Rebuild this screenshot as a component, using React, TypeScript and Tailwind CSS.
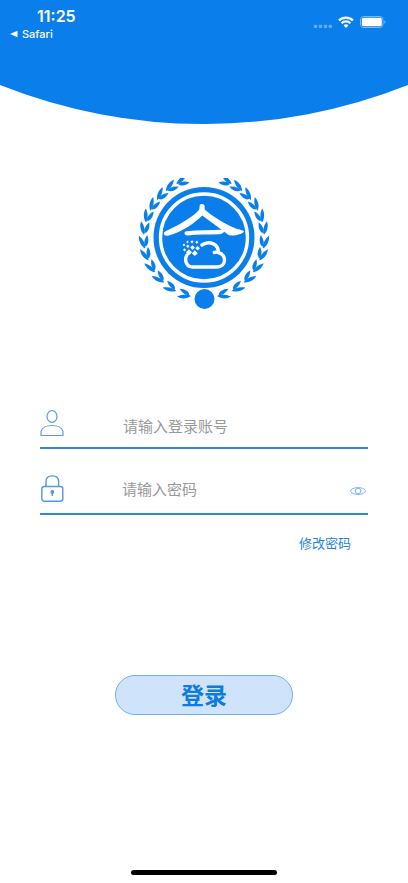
import { useState } from "react"

// Degrees around the emblem, measured from its bottom
const leafAngles = [14, 29, 43, 56, 69, 81, 94, 106, 118, 130, 142, 154]

function StatusBar() {
  return (
    <div className="flex items-start justify-between pt-1.5 pr-[22px] pl-2.5 text-white">
      <div>
        <p className="pl-[27px] font-['Inter'] text-base leading-5 font-semibold">11:25</p>
        <a href="#safari" className="flex items-center gap-1 font-['Inter'] text-[11px] leading-4 font-medium">
          <svg width="8" height="8" viewBox="0 0 8 8" fill="currentColor" aria-hidden="true">
            <path d="M0 4 7.5 .7v6.6z" />
          </svg>
          Safari
        </a>
      </div>

      <div className="flex items-center pt-2.5">
        <svg width="19" height="12" viewBox="0 0 19 12" fill="#fff" opacity=".35" aria-hidden="true">
          <rect x=".8" y="8.8" width="3.4" height="3.2" rx="1" />
          <rect x="5.8" y="8.8" width="3.4" height="3.2" rx="1" />
          <rect x="10.8" y="8.8" width="3.4" height="3.2" rx="1" />
          <rect x="15.6" y="8.8" width="3.4" height="3.2" rx="1" />
        </svg>
        <svg className="ml-1.5" width="16" height="12" viewBox="0 0 16 12" fill="none" stroke="#fff" strokeWidth="2.3" aria-hidden="true">
          <path d="M1 4.5a10 10 0 0 1 14 0" />
          <path d="M3.6 7.3a6.2 6.2 0 0 1 8.8 0" />
          <path d="M8 12 5.6 9.5a3.3 3.3 0 0 1 4.8 0z" fill="#fff" stroke="none" />
        </svg>
        <svg className="ml-1.5" width="26" height="12" viewBox="0 0 26 12" fill="#fff" aria-hidden="true">
          <rect x=".5" y=".5" width="22.5" height="11" rx="3.2" fill="none" stroke="#fff" strokeOpacity=".45" />
          <rect x="1.8" y="1.8" width="20" height="8.4" rx="1.8" />
          <path d="M24.4 4.2v3.6c1.5-.6 1.5-3 0-3.6z" opacity=".5" />
        </svg>
      </div>
    </div>
  )
}

function LeafBranch() {
  return (
    <g>
      {leafAngles.map((angle) => (
        <g key={angle} transform={`rotate(${-angle} 66 59.500) translate(66 119.500)`}>
          <path d="M.5-.4C2.500-3 7.500-3.200 12 0 8 2.100 3 2 .5-.4z" transform="rotate(-21)" />
          <path d="M-1.500.4C2-2 7-2.200 12.500 0 8.500 3 2.500 3-1.500.4z" transform="rotate(18)" />
        </g>
      ))}
    </g>
  )
}

function Emblem() {
  return (
    <svg width="132" height="131" viewBox="0 0 132 131" fill="#0a7eea" role="img" aria-label="Logo">
      <LeafBranch />
      <g transform="matrix(-1 0 0 1 132 0)">
        <LeafBranch />
      </g>
      <circle cx="66" cy="59.5" r="50.5" />
      <circle cx="66" cy="59.5" r="43.5" fill="none" stroke="#fff" strokeWidth="3.4" />
      <circle cx="66.5" cy="121" r="10" />

      {/* Roof and bar */}
      <path
        d="M28 53C40 47.500 54 39.500 60.500 32.500c1.500-2 .8-3.500 1.200-5 .8-2.200 4.400-1.800 4.900.5.300 1.600-.3 2.600.2 3.600C75 39 87 46 98 50.600c3 1.200 7.500 1.600 8 2.800-.8 2.200-7 4.200-12.500 4.100-3 0-4.500-1.800-7-3.600L64.300 37.400C57 44.500 45 53.500 31 57.400c-5 1.400-7-2.500-3-4.400z"
        fill="#fff"
      />
      <path d="M48.500 53.300c11-1.200 24-.8 35-1.500 3-.3 3.300 1.300 2 2.700-1.200 1.300-2.600 1.700-5 1.800-10 .3-20 0-31 1.100-3.500.2-4-3.700-1-4.100z" fill="#fff" />

      {/* Cloud dissolving into pixels */}
      <path
        d="M49 77c-3 5-.8 12 5.800 12h24.400c8.800 0 10.300-12 1-14.500C81 66.500 71.500 62 64 67M79.800 74.300c-1.200-.3-2.300-.3-3.500.1"
        fill="none"
        stroke="#fff"
        strokeWidth="3.4"
        strokeLinecap="round"
      />
      <g fill="#fff">
        <path d="m51 71.300 3 3-3 3-3-3zM56.800 72.300l2.900 2.900-2.900 2.900-2.900-2.900zM54.500 67.300l2.300 2.300-2.300 2.300-2.300-2.300zM59.600 68l2.300 2.300-2.300 2.300-2.300-2.300z" />
        <path d="m46.600 70.200 1.600 1.600-1.600 1.600-1.600-1.600zM49.800 66.500l1.800 1.800-1.800 1.800-1.800-1.800zM46 65.500l1.400 1.400-1.400 1.400-1.400-1.400zM49.500 62.500l1.400 1.400-1.400 1.400-1.400-1.400zM54 62.200l1.600 1.600-1.600 1.600-1.600-1.600zM58.800 62.600l1.600 1.600-1.600 1.600-1.600-1.600z" />
      </g>
    </svg>
  )
}

export default function App() {
  const [account, setAccount] = useState("")
  const [password, setPassword] = useState("")
  const [showPassword, setShowPassword] = useState(false)

  return (
    <div className="flex min-h-screen flex-col bg-white font-['Noto_Sans_CJK_SC',sans-serif]">
      {/* Header */}
      <header>
        <div className="h-[85px] bg-[#0a7eea]">
          <StatusBar />
        </div>
        <svg className="block h-[39px] w-full" viewBox="0 0 408 39" preserveAspectRatio="none" aria-hidden="true">
          <path d="M0 0A553 553 0 0 0 408 0z" fill="#0a7eea" />
        </svg>
      </header>

      <main className="flex flex-col px-10">
        <div className="flex justify-center pt-[54px]">
          <Emblem />
        </div>

        <form className="flex flex-col pt-[93px]" onSubmit={(e) => e.preventDefault()}>
          <div className="flex h-[47px] items-start border-b-2 border-[#3489c9] pt-2">
            <label htmlFor="account" aria-label="账号" className="w-[83px]">
              <svg width="24" height="28" viewBox="0 0 24 28" fill="none" stroke="#5a9fe6" strokeWidth="1.2">
                <ellipse cx="12" cy="6.5" rx="5" ry="5.8" />
                <path d="M1 25.5v-4.300c1.200-3.400 5.800-5.700 11-5.700s9.800 2.300 11 5.700v4.300z" strokeLinejoin="round" />
              </svg>
            </label>
            <input
              id="account"
              type="text"
              value={account}
              onChange={(e) => setAccount(e.target.value)}
              placeholder="请输入登录账号"
              className="mt-1 min-w-0 flex-1 text-[15px] leading-6 text-gray-800 outline-none placeholder:text-[#999]"
            />
          </div>

          <div className="mt-4 flex h-[50px] items-center border-b-2 border-[#3489c9]">
            <label htmlFor="password" aria-label="密码" className="w-[82px]">
              <svg width="24" height="28" viewBox="0 0 24 28" fill="none" stroke="#4f99e6" strokeWidth="1.4">
                <path d="M6 11.500V6.500C6 3 8.500.9 12.300.9s6.300 2.100 6.300 5.600v5" />
                <rect x="1.8" y="11.5" width="21" height="14.8" rx="2.5" />
                <circle cx="12.3" cy="17" r="1.2" fill="#2f86df" />
                <path d="M12.300 17v4" />
              </svg>
            </label>
            <input
              id="password"
              type={showPassword ? "text" : "password"}
              value={password}
              onChange={(e) => setPassword(e.target.value)}
              placeholder="请输入密码"
              className="min-w-0 flex-1 text-[15px] leading-6 text-gray-800 outline-none placeholder:text-[#999]"
            />
            <button type="button" aria-label="显示密码" onClick={() => setShowPassword(!showPassword)} className="mt-1 mr-0.5">
              <svg width="16" height="8" viewBox="0 0 16 8" fill="none" stroke="#7db5ef">
                <ellipse cx="8" cy="4" rx="7.4" ry="3.4" />
                <circle cx="8" cy="4" r="2.8" />
              </svg>
            </button>
          </div>

          <a href="#change-password" className="mt-[18px] mr-[17px] self-end text-[13px] leading-5 text-[#2284df]">
            修改密码
          </a>

          <button
            type="submit"
            className="mt-[122px] h-10 w-[178px] self-center rounded-full border border-[#72aee8] bg-[#cfe4fb] pb-0.5 text-[23px] leading-8 font-bold text-[#0f7ae0]"
          >
            登录
          </button>
        </form>
      </main>

      {/* Home indicator */}
      <footer className="mt-auto flex justify-center pb-2">
        <div className="h-[5px] w-[146px] rounded-full bg-black" />
      </footer>
    </div>
  )
}
